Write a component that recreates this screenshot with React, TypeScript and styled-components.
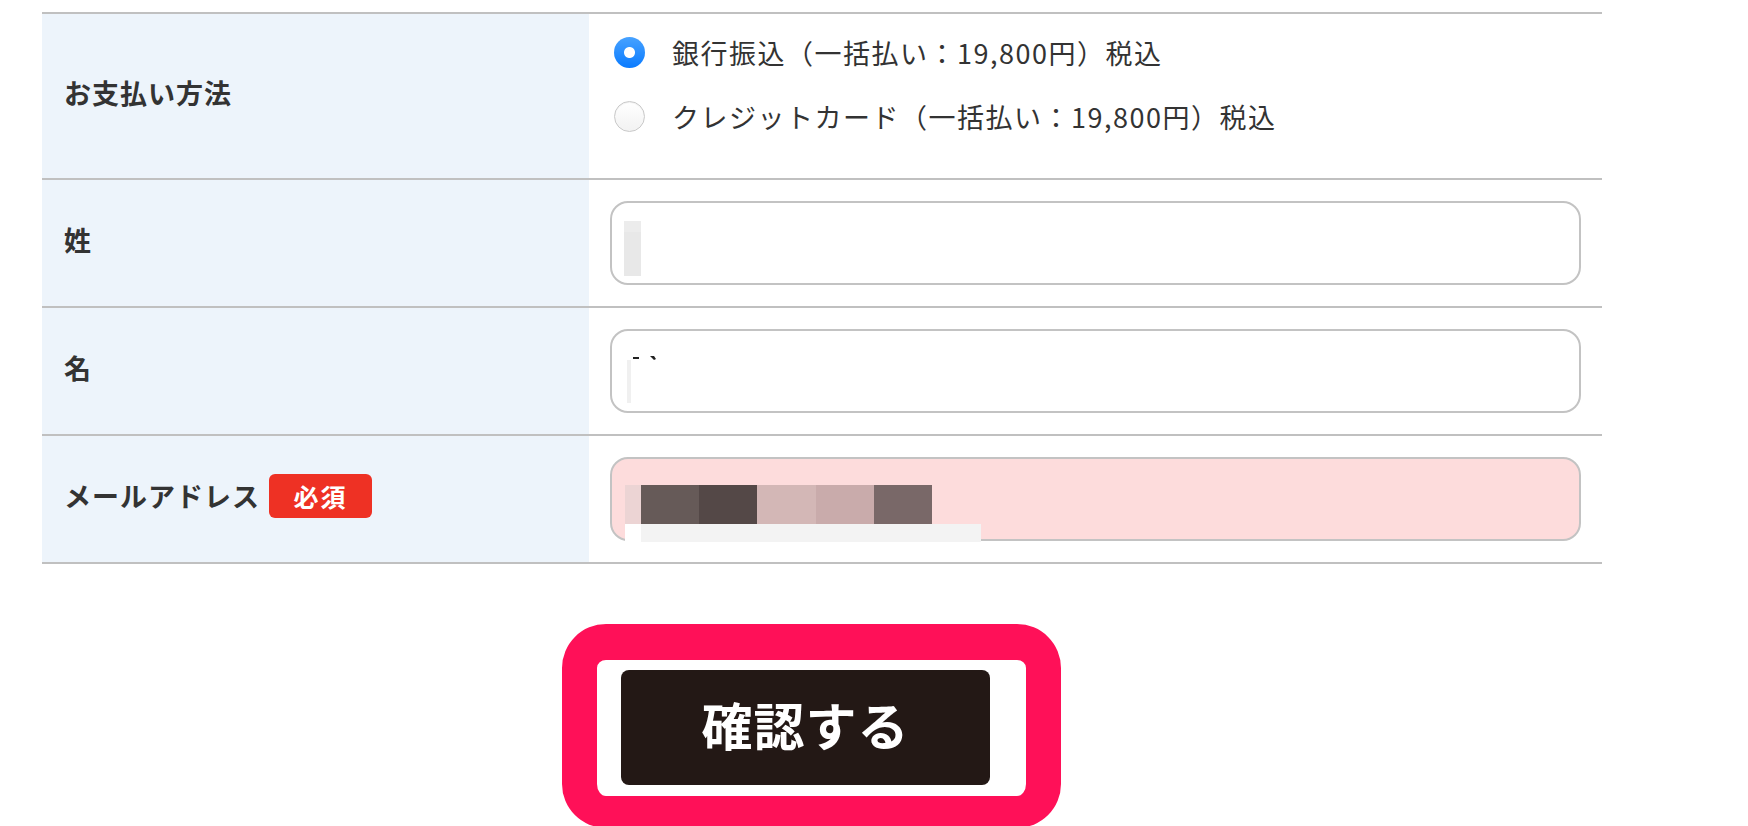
import React from "react";
import styled, { createGlobalStyle } from "styled-components";

const GlobalStyle = createGlobalStyle`
  html, body {
    margin: 0;
    padding: 0;
    background: #fff;
    overflow: hidden;
  }
  body {
    font-family: "Noto Sans CJK JP", "Noto Sans", sans-serif;
    color: #333;
  }
`;

const Page = styled.div`
  padding: 12px 0 0 42px;
  width: 1560px;
`;

const Table = styled.div`
  width: 1560px;
  border-bottom: 2px solid #c0c0c0;
`;

const Row = styled.div`
  display: grid;
  grid-template-columns: 547px 1fr;
  border-top: 2px solid #c0c0c0;
`;

const Label = styled.div`
  background: #edf4fb;
  display: flex;
  align-items: center;
  gap: 9px;
  padding: 0 0 7px 22px;
  font-size: 27px;
  font-weight: 700;
  letter-spacing: 1px;
  color: #333;
`;

const Badge = styled.span`
  display: inline-flex;
  align-items: center;
  justify-content: center;
  width: 103px;
  height: 44px;
  border-radius: 6px;
  background: #ee3124;
  color: #fff;
  font-size: 25px;
  font-weight: 700;
  letter-spacing: 2px;
`;

const Cell = styled.div`
  padding: 21px;
`;

const RadioGroup = styled.div`
  display: flex;
  flex-direction: column;
  gap: 24px;
  padding: 18px 0 42px 25px;
`;

const Option = styled.label`
  display: flex;
  align-items: center;
  gap: 27px;
  height: 40px;
  font-size: 27px;
  letter-spacing: 1.5px;
  color: #333;
`;

const Radio = styled.input`
  appearance: none;
  margin: 0;
  width: 31px;
  height: 31px;
  border-radius: 50%;
  box-sizing: border-box;
  flex-shrink: 0;
  border: 1px solid #c9c9c9;
  background: linear-gradient(#ffffff, #f2f2f2);
  box-shadow: inset 0 1px 1px rgba(0, 0, 0, 0.06);

  &:checked {
    border: none;
    box-shadow: none;
    background:
      radial-gradient(circle, #fff 0 5px, transparent 6px),
      linear-gradient(#47a2ff, #0a7bff);
  }
`;

const Field = styled.div<{ $error?: boolean; $pad: string }>`
  box-sizing: border-box;
  height: 84px;
  border: 2px solid #c3c3c3;
  border-radius: 18px;
  background: ${(p) => (p.$error ? "#fddcdc" : "#fff")};
  padding: ${(p) => p.$pad};
  display: flex;
  align-items: flex-start;
`;

const Block = styled.div`
  width: 17px;
  height: 55px;
  background: linear-gradient(#ececec 0 20%, #e8e8e8 20%);
`;

const Mosaic = styled.div`
  display: flex;
  flex-direction: column;
`;

const MosaicRow = styled.div`
  display: flex;
`;

const Tile = styled.div<{ $w: number; $h: number; $c: string }>`
  width: ${(p) => p.$w}px;
  height: ${(p) => p.$h}px;
  background: ${(p) => p.$c};
`;

const ButtonArea = styled.div`
  padding: 60px 0 0 520px;
`;

const Highlight = styled.div`
  display: inline-flex;
  border-style: solid;
  border-color: #ff1058;
  border-width: 36px 35px 32px 35px;
  border-radius: 44px;
  padding: 10px 36px 11px 24px;
  background: #fff;
`;

const ConfirmButton = styled.button`
  width: 369px;
  height: 115px;
  padding: 0 0 8px;
  border: none;
  border-radius: 8px;
  background: #231815;
  color: #fff;
  font-family: "Noto Sans CJK JP", sans-serif;
  font-size: 51px;
  font-weight: 700;
  letter-spacing: 1px;
`;

const topTiles = [
  { w: 16, c: "#ecd4d4" },
  { w: 58, c: "#665a58" },
  { w: 58, c: "#544847" },
  { w: 59, c: "#d3b7b6" },
  { w: 58, c: "#c9abab" },
  { w: 58, c: "#796868" },
];

export default function App() {
  return (
    <>
      <GlobalStyle />
      <Page>
        <Table>
          <Row>
            <Label>お支払い方法</Label>
            <RadioGroup>
              <Option>
                <Radio type="radio" name="pay" defaultChecked />
                銀行振込（一括払い：19,800円）税込
              </Option>
              <Option>
                <Radio type="radio" name="pay" />
                クレジットカード（一括払い：19,800円）税込
              </Option>
            </RadioGroup>
          </Row>
          <Row>
            <Label>姓</Label>
            <Cell>
              <Field $pad="18px 12px">
                <Block />
              </Field>
            </Cell>
          </Row>
          <Row>
            <Label>名</Label>
            <Cell>
              <Field $pad="24px 15px">
                <svg width="34" height="50" viewBox="0 0 34 50">
                  <rect x="0" y="5" width="4" height="43" fill="#f0f0f0" />
                  <rect x="6" y="2" width="6" height="2" fill="#222" />
                  <path d="M23 1 L27 1 L29 4 L27 5 Z" fill="#222" />
                </svg>
              </Field>
            </Cell>
          </Row>
          <Row>
            <Label>
              メールアドレス<Badge>必須</Badge>
            </Label>
            <Cell>
              <Field $error $pad="26px 13px">
                <Mosaic>
                  <MosaicRow>
                    {topTiles.map((t, i) => (
                      <Tile key={i} $w={t.w} $h={39} $c={t.c} />
                    ))}
                  </MosaicRow>
                  <MosaicRow>
                    <Tile $w={16} $h={18} $c="#ffffff" />
                    <Tile $w={340} $h={18} $c="#f3f3f3" />
                  </MosaicRow>
                </Mosaic>
              </Field>
            </Cell>
          </Row>
        </Table>
        <ButtonArea>
          <Highlight>
            <ConfirmButton>確認する</ConfirmButton>
          </Highlight>
        </ButtonArea>
      </Page>
    </>
  );
}
